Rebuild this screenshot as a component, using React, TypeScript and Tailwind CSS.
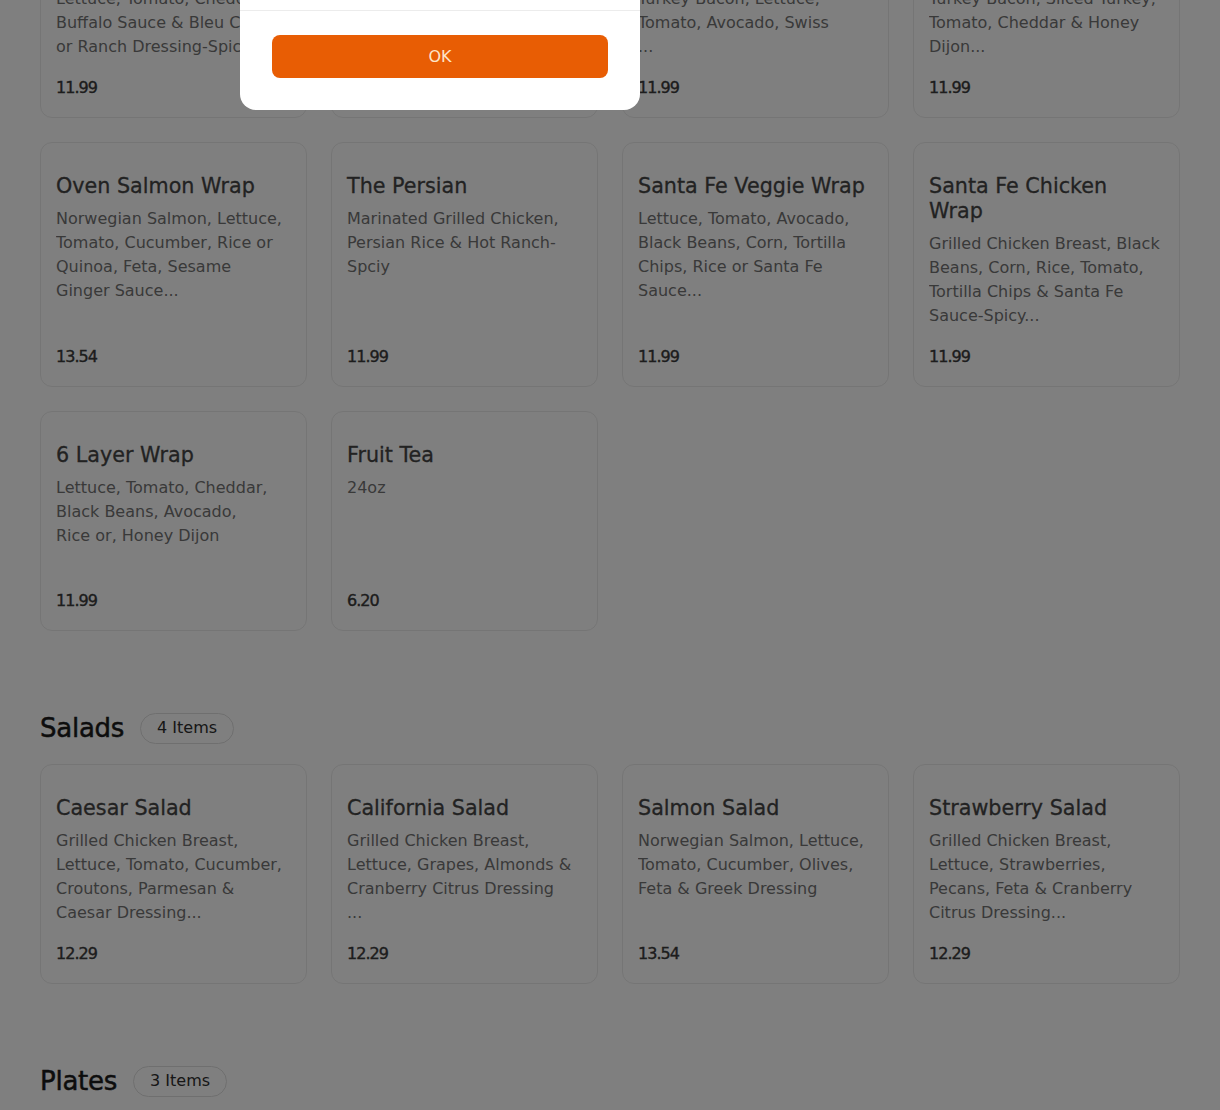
import React from 'react'

interface MenuItem {
  name: string
  desc: string
  price: string
}

interface Section {
  title: string
  items: MenuItem[]
}

const sections: Section[] = [
  {
    title: 'Wraps',
    items: [
      { name: 'Buffalo Chicken Wrap', desc: 'Grilled Chicken Breast, Lettuce, Tomato, Cheddar, Buffalo Sauce & Bleu Cheese or Ranch Dressing-Spicy...', price: '11.99' },
      { name: 'Chicken Caesar Wrap', desc: 'Grilled Chicken Breast, Romaine, Parmesan, Croutons & Caesar Dressing', price: '11.99' },
      { name: 'Turkey Club Wrap', desc: 'Grilled Chicken Breast, Turkey Bacon, Lettuce, Tomato, Avocado, Swiss\n...', price: '11.99' },
      { name: 'Honey Dijon Wrap', desc: 'Grilled Chicken Breast, Turkey Bacon, Sliced Turkey, Tomato, Cheddar & Honey Dijon...', price: '11.99' },
      { name: 'Oven Salmon Wrap', desc: 'Norwegian Salmon, Lettuce, Tomato, Cucumber, Rice or Quinoa, Feta, Sesame Ginger Sauce...', price: '13.54' },
      { name: 'The Persian', desc: 'Marinated Grilled Chicken, Persian Rice & Hot Ranch-Spciy', price: '11.99' },
      { name: 'Santa Fe Veggie Wrap', desc: 'Lettuce, Tomato, Avocado, Black Beans, Corn, Tortilla Chips, Rice or Santa Fe Sauce...', price: '11.99' },
      { name: 'Santa Fe Chicken Wrap', desc: 'Grilled Chicken Breast, Black Beans, Corn, Rice, Tomato, Tortilla Chips & Santa Fe Sauce-Spicy...', price: '11.99' },
      { name: '6 Layer Wrap', desc: 'Lettuce, Tomato, Cheddar, Black Beans, Avocado,\nRice or, Honey Dijon', price: '11.99' },
      { name: 'Fruit Tea', desc: '24oz', price: '6.20' },
    ],
  },
  {
    title: 'Salads',
    items: [
      { name: 'Caesar Salad', desc: 'Grilled Chicken Breast, Lettuce, Tomato, Cucumber, Croutons, Parmesan & Caesar Dressing...', price: '12.29' },
      { name: 'California Salad', desc: 'Grilled Chicken Breast, Lettuce, Grapes, Almonds & Cranberry Citrus Dressing\n...', price: '12.29' },
      { name: 'Salmon Salad', desc: 'Norwegian Salmon, Lettuce, Tomato, Cucumber, Olives, Feta & Greek Dressing', price: '13.54' },
      { name: 'Strawberry Salad', desc: 'Grilled Chicken Breast, Lettuce, Strawberries, Pecans, Feta & Cranberry Citrus Dressing...', price: '12.29' },
    ],
  },
  {
    title: 'Plates',
    items: [
      { name: 'Chicken Plate', desc: 'Grilled Chicken Breast, Rice, Salad & Pita', price: '13.54' },
      { name: 'Salmon Plate', desc: 'Norwegian Salmon, Rice, Salad & Pita', price: '15.99' },
      { name: 'Persian Plate', desc: 'Marinated Grilled Chicken, Persian Rice & Salad', price: '13.54' },
    ],
  },
]

function ItemCard({ item }: { item: MenuItem }) {
  return (
    <div className="flex flex-col rounded-xl border border-[#ebebeb] bg-white pl-[15px] pr-[17px] pt-[31px] pb-[17px]">
      <h3 className="text-[20.7px] leading-[25px] text-[#454545] [-webkit-text-stroke:0.3px_#454545]">{item.name}</h3>
      <p className="mt-2 mb-[17px] h-24 overflow-hidden whitespace-pre-line text-base leading-6 text-[#737373]">{item.desc}</p>
      <div className="mt-auto text-base leading-6 tracking-[-0.06em] text-[#3a3a3a] [-webkit-text-stroke:0.4px_#3a3a3a]">{item.price}</div>
    </div>
  )
}

export default function App() {
  return (
    <div className="relative h-[1110px] overflow-hidden bg-white" style={{ fontFamily: '"DejaVu Sans", "Liberation Sans", sans-serif' }}>
      {/* page content, scrolled past the section header */}
      <div className="-mt-[154px] flex flex-col gap-[81px] px-10">
        {sections.map(section => (
          <section key={section.title}>
            <div className="flex h-8 items-center gap-4">
              <h2 className="text-[26px] leading-8 tracking-[-0.01em] text-[#1a1a1a] [-webkit-text-stroke:0.5px_#1a1a1a]">{section.title}</h2>
              <span className="flex h-[31px] items-center rounded-full border border-[#dedede] px-4 text-base text-[#2e2e2e]">
                {section.items.length} Items
              </span>
            </div>
            <div className="mt-5 grid grid-cols-4 gap-6">
              {section.items.map(item => (
                <ItemCard key={item.name} item={item} />
              ))}
            </div>
          </section>
        ))}
      </div>

      {/* dim overlay */}
      <div className="fixed inset-0 bg-black/50" />

      {/* alert dialog (top part scrolled out of view) */}
      <div className="fixed left-[240px] top-[110px] w-[400px] -translate-y-full rounded-b-2xl bg-white">
        <div className="px-8 pt-8 pb-6 text-center">
          <p className="text-lg text-[#222]">Notice</p>
          <p className="mt-2 text-sm text-[#666]">This store is currently closed for online orders.</p>
        </div>
        <div className="border-t border-[#ececec] px-8 pt-6 pb-8">
          <button className="h-[43px] w-full rounded-lg bg-[#e85d04] text-base text-[#fde4c8]">OK</button>
        </div>
      </div>
    </div>
  )
}
